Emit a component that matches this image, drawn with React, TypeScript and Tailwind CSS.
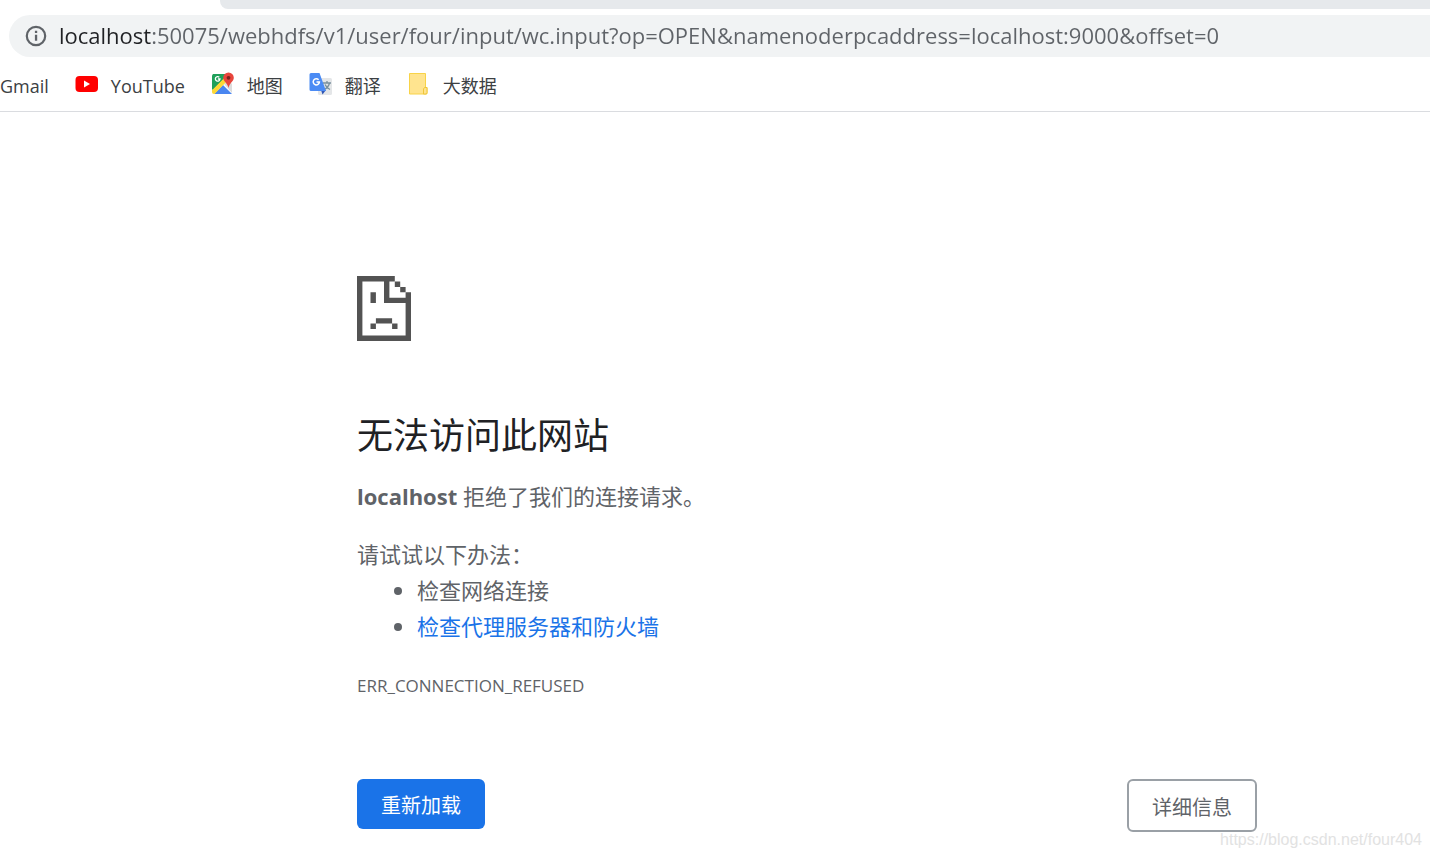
import { useState } from "react";
import type { ReactNode } from "react";

const START_URL =
  "localhost:50075/webhdfs/v1/user/four/input/wc.input?op=OPEN&namenoderpcaddress=localhost:9000&offset=0";

function InfoIcon() {
  return (
    <svg viewBox="0 0 22 22" className="size-[22px] shrink-0" aria-hidden="true">
      <circle cx="11" cy="11" r="9.2" fill="none" stroke="#5f6368" strokeWidth="2.2" />
      <path d="M9.900 9.800h2.300v6H9.900zM9.900 5.800h2.300v2.300H9.900z" fill="#5f6368" />
    </svg>
  );
}

function YouTubeIcon() {
  return (
    <svg viewBox="0 0 24 24" className="size-6" aria-hidden="true">
      <rect x="0.500" y="4" width="22.500" height="16" rx="4" fill="#ff0000" />
      <path d="M9 8.500l6 3.500-6 3.500z" fill="#fff" />
    </svg>
  );
}

function MapsIcon() {
  return (
    <svg viewBox="0 0 24 24" className="size-6" aria-hidden="true">
      <path d="M2 2h16L2 19z" fill="#2a9d58" />
      <path d="M3 22L12 13l9 9z" fill="#4a86f0" />
      <path d="M13 12l4-4 4 4v9z" fill="#dcdcdc" />
      <path d="M1 18L16 3l3 3L3.500 22H3a2 2 0 01-2-2z" fill="#fdd835" />
      <path d="M1 4a2 2 0 012-2h13v1L1 18z" fill="#1fa05a" />
      <path
        d="M8.300 5.200A2.300 2.300 0 109 7H6.900"
        fill="none"
        stroke="#fff"
        strokeWidth="1.300"
      />
      <path
        d="M17.500.5a5.300 5.300 0 00-5.300 5.300c0 3.700 4.300 5 5.300 10.200 1-5.200 5.300-6.500 5.300-10.200A5.300 5.300 0 0017.500.5z"
        fill="#e8453c"
      />
      <circle cx="17.500" cy="5.800" r="1.900" fill="#7b231e" />
    </svg>
  );
}

function TranslateIcon() {
  return (
    <svg viewBox="0 0 24 24" className="size-6" aria-hidden="true">
      <rect x="9" y="6" width="14" height="17" rx="1.500" fill="#e4e6e8" />
      <path
        d="M14 11h8M18 9v2M20.500 11c-.6 3-2.600 5-5 6.500M16 12.500c1 2.200 2.800 3.900 5 5"
        fill="none"
        stroke="#78909c"
        strokeWidth="1.300"
      />
      <path d="M12 18h5l-3.500 4.500z" fill="#3157b5" />
      <path d="M2 1h8.500L17 19H2a1.500 1.500 0 01-1.500-1.500v-15A1.500 1.500 0 012 1z" fill="#4b8bf4" />
      <path
        d="M9.600 7.700A3.100 3.100 0 1010.400 10H7.500"
        fill="none"
        stroke="#fff"
        strokeWidth="1.500"
      />
    </svg>
  );
}

function FolderIcon() {
  return (
    <svg viewBox="0 0 24 24" className="size-6" aria-hidden="true">
      <path d="M2.500 1.500h16v14h1.500v6.500H2.500z" fill="#ffe48f" stroke="#f8d348" />
      <path d="M16.500 22v-5l1-1.500H20v5L19 22z" fill="#ffe48f" stroke="#efc63a" />
    </svg>
  );
}

function SadPageIcon() {
  return (
    <svg
      viewBox="0 0 20 24"
      className="h-[65px] w-[54px]"
      fill="#535353"
      aria-hidden="true"
    >
      <path d="M0 0h14v2h-2v6h6V6h2v18H0zM2 2v20h16V10h-8V2z" fillRule="evenodd" />
      <path d="M14 2h2v2h-2zM16 4h2v2h-2zM5 6h2v4H5zM7 15.600h6v2H7zM5 17.600h2v2H5zM13 17.600h2v2h-2z" />
    </svg>
  );
}

function Bookmark({ icon, label }: { icon?: ReactNode; label: string }) {
  return (
    <a href="#" className="flex items-center gap-3 whitespace-nowrap">
      {icon}
      <span className="pt-1">{label}</span>
    </a>
  );
}

export default function App() {
  const [url, setUrl] = useState(START_URL);

  return (
    <div className="relative flex min-h-screen flex-col bg-white font-['Open_Sans','Noto_Sans_CJK_SC',sans-serif] text-[#5f6368]">
      <header className="border-b border-[#dadce0]">
        <div className="ml-[220px] h-[9px] rounded-bl-lg bg-[#e6e9ec]" />
        <div className="mt-[6px] ml-[9px] flex h-[42px] items-center gap-3 rounded-l-full bg-[#f1f3f4] pl-4">
          <InfoIcon />
          {/* host part is darker than the rest of the address */}
          <input
            type="text"
            aria-label="地址"
            spellCheck={false}
            value={url}
            onChange={(e) => setUrl(e.target.value)}
            className="h-full min-w-0 flex-1 bg-[linear-gradient(90deg,#202124_92px,#5f6368_92px)] bg-clip-text pb-0.5 text-[22px] text-[#5f6368] outline-none [-webkit-text-fill-color:transparent]"
          />
        </div>
        <nav className="flex h-[54px] items-center gap-[26px] text-[18px] text-[#3c4043]">
          <Bookmark label="Gmail" />
          <Bookmark icon={<YouTubeIcon />} label="YouTube" />
          <Bookmark icon={<MapsIcon />} label="地图" />
          <Bookmark icon={<TranslateIcon />} label="翻译" />
          <Bookmark icon={<FolderIcon />} label="大数据" />
        </nav>
      </header>

      <main className="pt-[164px] pr-[173px] pl-[357px] text-[22px] leading-9">
        <SadPageIcon />
        <h1 className="mt-[71px] text-4xl leading-12 text-[#202124]">无法访问此网站</h1>
        <p className="mt-[18px]">
          <strong className="font-bold">localhost</strong> 拒绝了我们的连接请求。
        </p>
        <p className="mt-[22px]">请试试以下办法：</p>
        <ul className="list-disc pl-[60px]">
          <li>检查网络连接</li>
          <li>
            <a href="#" className="text-[#1a73e8]">
              检查代理服务器和防火墙
            </a>
          </li>
        </ul>
        <p className="mt-[30px] text-[17px] leading-6">ERR_CONNECTION_REFUSED</p>
        <div className="mt-[81px] flex items-start justify-between text-[20px]">
          <button type="button" className="h-[50px] rounded-md bg-[#1a73e8] px-6 pt-1 text-white">
            重新加载
          </button>
          <button
            type="button"
            className="h-[53px] rounded-md border-2 border-[#9aa0a6] px-[23px] pt-1"
          >
            详细信息
          </button>
        </div>
      </main>

      <p className="absolute right-2 bottom-2 font-['Liberation_Sans',sans-serif] text-[16px] leading-5 text-[#e2e2e2]">
        https://blog.csdn.net/four404
      </p>
    </div>
  );
}
